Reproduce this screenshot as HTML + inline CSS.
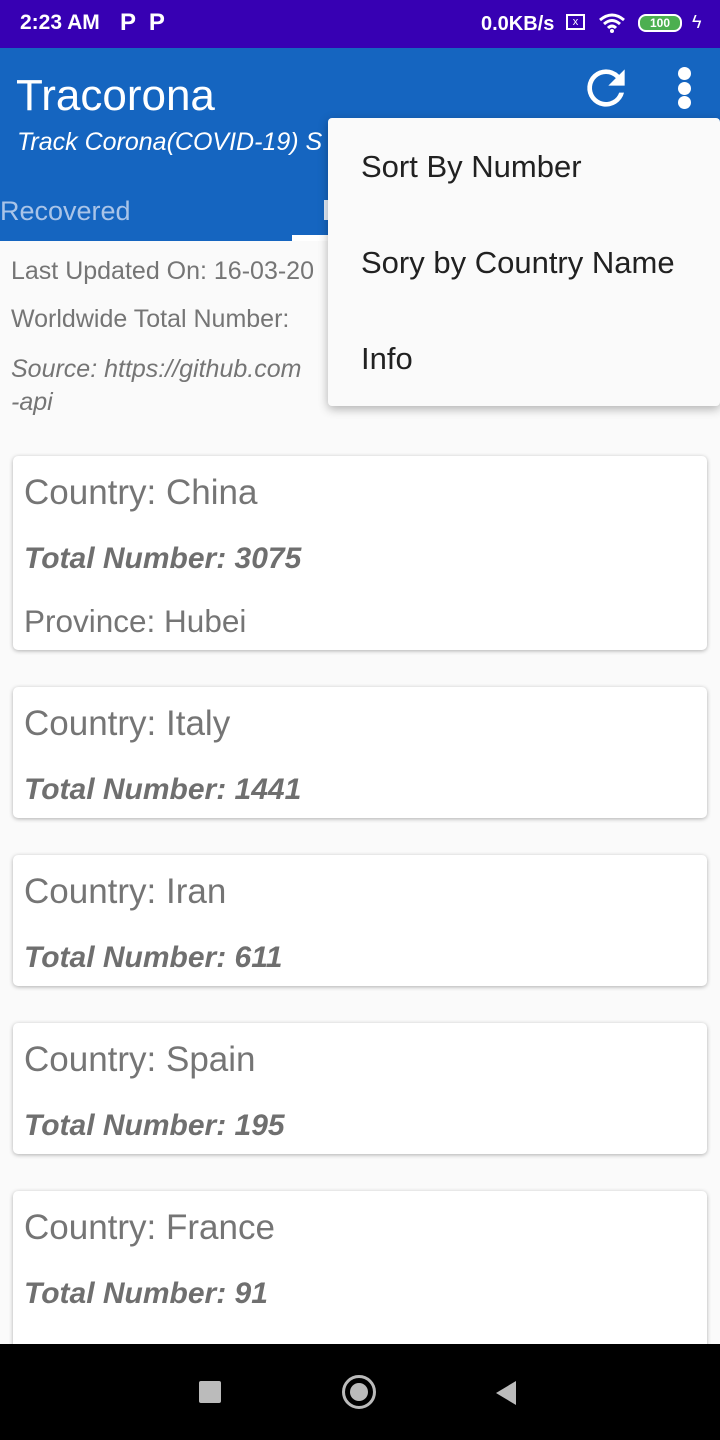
<!DOCTYPE html><html><head><style>
body{margin:0;width:720px;height:1440px;background:#fafafa;font-family:"Liberation Sans",sans-serif;position:relative;overflow:hidden;color:#757575}
.a{position:absolute}
.card{position:absolute;left:13px;width:694px;background:#fff;border-radius:5px;box-shadow:0 1px 4px rgba(0,0,0,.3)}
.card .c{position:absolute;left:11px;font-size:35px;color:#757575}
.card .t{position:absolute;left:11px;font-size:30px;font-style:italic;font-weight:bold;color:#6f6f6f}
.menu div{position:absolute;left:33px;font-size:31px;color:#212121}
</style></head><body>
<div class="a" style="left:0;top:0;width:720px;height:48px;background:#3700b3"></div>
<div class="a" style="left:20px;top:11px;color:#fff;font-size:21px;font-weight:bold">2:23 AM</div>
<div class="a" style="left:120px;top:9px;color:#fff;font-size:24px;font-weight:bold">P &nbsp;P</div>
<div class="a" style="left:481px;top:13px;color:#fff;font-size:20px;font-weight:bold">0.0KB/s</div>
<div class="a" style="left:566px;top:14px;width:19px;height:16px;border:2px solid #fff;box-sizing:border-box;color:#fff;font-size:11px;text-align:center;line-height:12px">x</div>
<svg class="a" style="left:598px;top:12px" width="28" height="22"><path d="M2 8Q14-2 26 8M6 12Q14 5 22 12M10 16Q14 12 18 16" stroke="#fff" stroke-width="3" fill="none"/><circle cx="14" cy="19" r="2" fill="#fff"/></svg>
<div class="a" style="left:638px;top:14px;width:44px;height:18px;border:2px solid #fff;border-radius:8px;box-sizing:border-box;background:#4caf50;color:#fff;font-size:12px;font-weight:bold;text-align:center;line-height:14px">100</div>
<div class="a" style="left:692px;top:12px;color:#fff;font-size:18px">ϟ</div>
<div class="a" style="left:0;top:48px;width:720px;height:193px;background:#1565c0"></div>
<div class="a" style="left:16px;top:71px;color:#fff;font-size:44px">Tracorona</div>
<div class="a" style="left:17px;top:128px;color:#fff;font-size:25px;font-style:italic">Track Corona(COVID-19) S</div>
<div class="a" style="left:0;top:196px;color:#a9c4e8;font-size:27px">Recovered</div>
<div class="a" style="left:324px;top:200px;width:5px;height:20px;background:#e3ecf8"></div>
<div class="a" style="left:292px;top:235px;width:40px;height:6px;background:#fff"></div>
<svg class="a" style="left:578px;top:60px" width="56" height="56" viewBox="0 0 24 24"><path fill="#fff" d="M17.65 6.35A7.96 7.96 0 0 0 12 4a8 8 0 1 0 7.73 10h-2.08A6 6 0 1 1 12 6c1.66 0 3.14.69 4.22 1.78L13 11h7V4l-2.35 2.35z"/></svg>
<div class="a" style="left:678px;top:67px;width:13px;height:13px;border-radius:7px;background:#fff"></div>
<div class="a" style="left:678px;top:82px;width:13px;height:13px;border-radius:7px;background:#fff"></div>
<div class="a" style="left:678px;top:96px;width:13px;height:13px;border-radius:7px;background:#fff"></div>
<div class="a" style="left:11px;top:257px;font-size:25px">Last Updated On: 16-03-20</div>
<div class="a" style="left:11px;top:305px;font-size:25px">Worldwide Total Number:</div>
<div class="a" style="left:11px;top:353px;font-size:25px;font-style:italic;line-height:33px">Source: https://github.com<br>-api</div>
<div class="card" style="top:456px;height:194px"><div class="c" style="top:17px">Country: China</div><div class="t" style="top:86px">Total Number: 3075</div><div class="c" style="top:147px;font-size:31.5px">Province: Hubei</div></div>
<div class="card" style="top:687px;height:131px"><div class="c" style="top:17px">Country: Italy</div><div class="t" style="top:86px">Total Number: 1441</div></div>
<div class="card" style="top:855px;height:131px"><div class="c" style="top:17px">Country: Iran</div><div class="t" style="top:86px">Total Number: 611</div></div>
<div class="card" style="top:1023px;height:131px"><div class="c" style="top:17px">Country: Spain</div><div class="t" style="top:86px">Total Number: 195</div></div>
<div class="card" style="top:1191px;height:180px"><div class="c" style="top:17px">Country: France</div><div class="t" style="top:86px">Total Number: 91</div></div>
<div class="menu a" style="left:328px;top:118px;width:392px;height:288px;background:#fafafa;border-radius:4px;box-shadow:0 3px 10px rgba(0,0,0,.3)">
<div style="top:31px">Sort By Number</div><div style="top:127px">Sory by Country Name</div><div style="top:223px">Info</div></div>
<div class="a" style="left:0;top:1344px;width:720px;height:96px;background:#000"></div>
<div class="a" style="left:199px;top:1381px;width:22px;height:22px;background:#bbb;border-radius:2px"></div>
<div class="a" style="left:342px;top:1375px;width:28px;height:28px;border:3px solid #bbb;border-radius:50%"></div>
<div class="a" style="left:350px;top:1383px;width:18px;height:18px;background:#bbb;border-radius:50%"></div>
<svg class="a" style="left:494px;top:1380px" width="24" height="26"><path d="M22 1V25L2 13Z" fill="#bbb"/></svg>
</body></html>
